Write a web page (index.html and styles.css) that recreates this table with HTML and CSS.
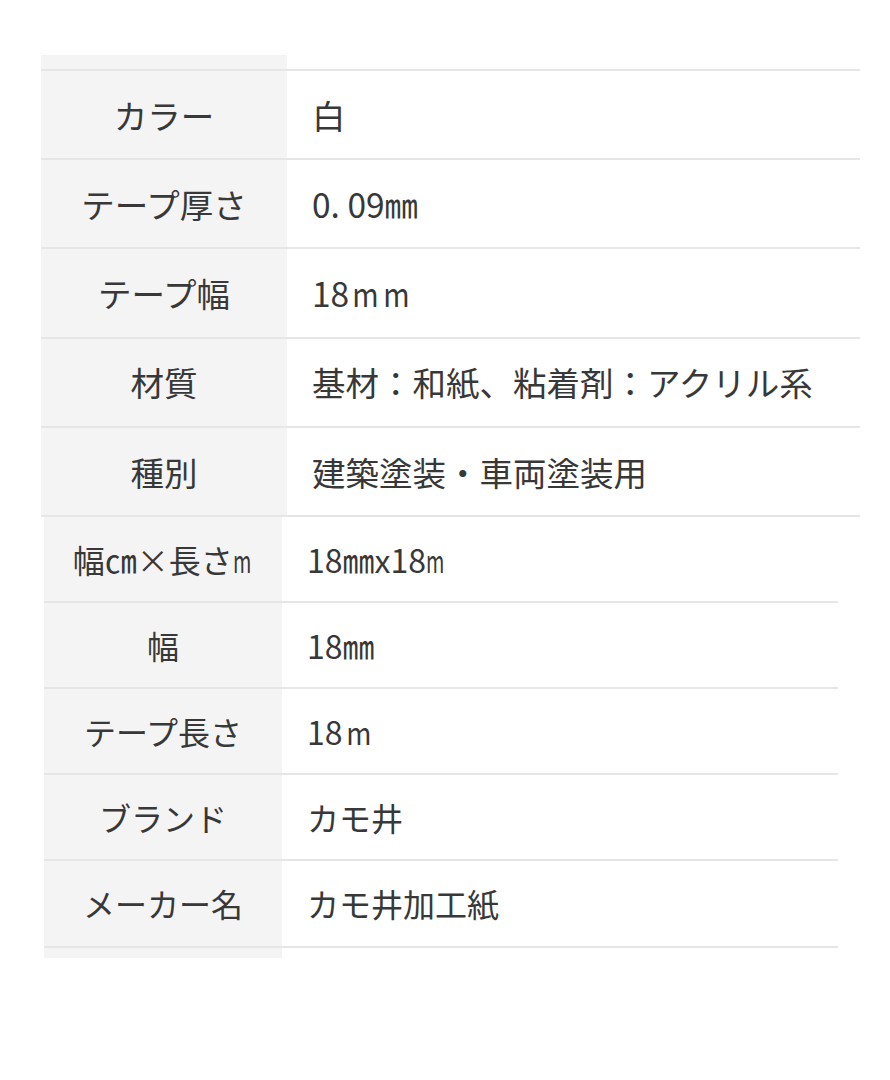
FILE: index.html
```html
<!DOCTYPE html>
<html lang="ja">
<head>
<meta charset="utf-8">
<title>商品仕様</title>
<link rel="stylesheet" href="styles.css">
</head>
<body>
<main class="page">
  <table class="spec spec-main">
    <tr class="spacer"><th></th><td></td></tr>
    <tr><th>カラー</th><td>白</td></tr>
    <tr><th>テープ厚さ</th><td>0. 09㎜</td></tr>
    <tr><th>テープ幅</th><td>18<span class="wm">m</span><span class="wm">m</span></td></tr>
    <tr><th>材質</th><td>基材：和紙、粘着剤：アクリル系</td></tr>
    <tr><th>種別</th><td>建築塗装・車両塗装用</td></tr>
  </table>
  <table class="spec spec-sub">
    <tr><th>幅㎝×長さ<span class="nm">m</span></th><td>18㎜x18<span class="nm">m</span></td></tr>
    <tr><th>幅</th><td>18㎜</td></tr>
    <tr><th>テープ長さ</th><td>18<span class="wm">m</span></td></tr>
    <tr><th>ブランド</th><td>カモ井</td></tr>
    <tr><th>メーカー名</th><td>カモ井加工紙</td></tr>
    <tr class="spacer"><th></th><td></td></tr>
  </table>
</main>
</body>
</html>
```

FILE: styles.css
```css
html, body {
  margin: 0;
  padding: 0;
  background: #ffffff;
}

body {
  font-family: "Noto Sans CJK JP", "Noto Sans", sans-serif;
  color: #383838;
}

.page {
  padding-top: 55px;
}

.spec {
  border-collapse: collapse;
  table-layout: fixed;
}

.spec th,
.spec td {
  padding: 0;
  vertical-align: middle;
  font-weight: 400;
  line-height: 1;
}

.spec th {
  background: #f4f4f4;
  text-align: center;
}

.spec td {
  text-align: left;
}

/* top table */
.spec-main {
  margin-left: 41px;
  width: 819px;
}

.spec-main th {
  width: 246px;
}

.spec-main tr {
  height: 89.2px;
  border-top: 2px solid #e6e6e6;
}

.spec-main tr:last-child {
  border-bottom: 2px solid #e6e6e6;
}

.spec-main th,
.spec-main td {
  font-size: 33.5px;
}

.spec-main td {
  padding-left: 25px;
}

.spec-main tr.spacer {
  height: 15px;
  border-top: 0;
}

/* bottom table */
.spec-sub {
  margin-left: 44px;
  width: 794px;
}

.spec-sub th {
  width: 238px;
}

.spec-sub tr {
  height: 86px;
  border-bottom: 2px solid #e6e6e6;
}

.spec-sub tr:first-child {
  height: 85px;
}

.spec-sub tr:nth-child(5) {
  height: 87px;
}

.spec-sub th,
.spec-sub td {
  font-size: 32px;
}

.spec-sub td {
  padding-left: 25px;
}

.spec-sub tr.spacer {
  height: 11px;
  border-bottom: 0;
}

.nm {
  display: inline-block;
  transform: scaleX(0.62);
  transform-origin: left center;
  margin-right: -9px;
}

.wm {
  display: inline-block;
  transform: scaleX(0.85);
  transform-origin: center;
  margin: 0 -1px 0 1px;
}
```
